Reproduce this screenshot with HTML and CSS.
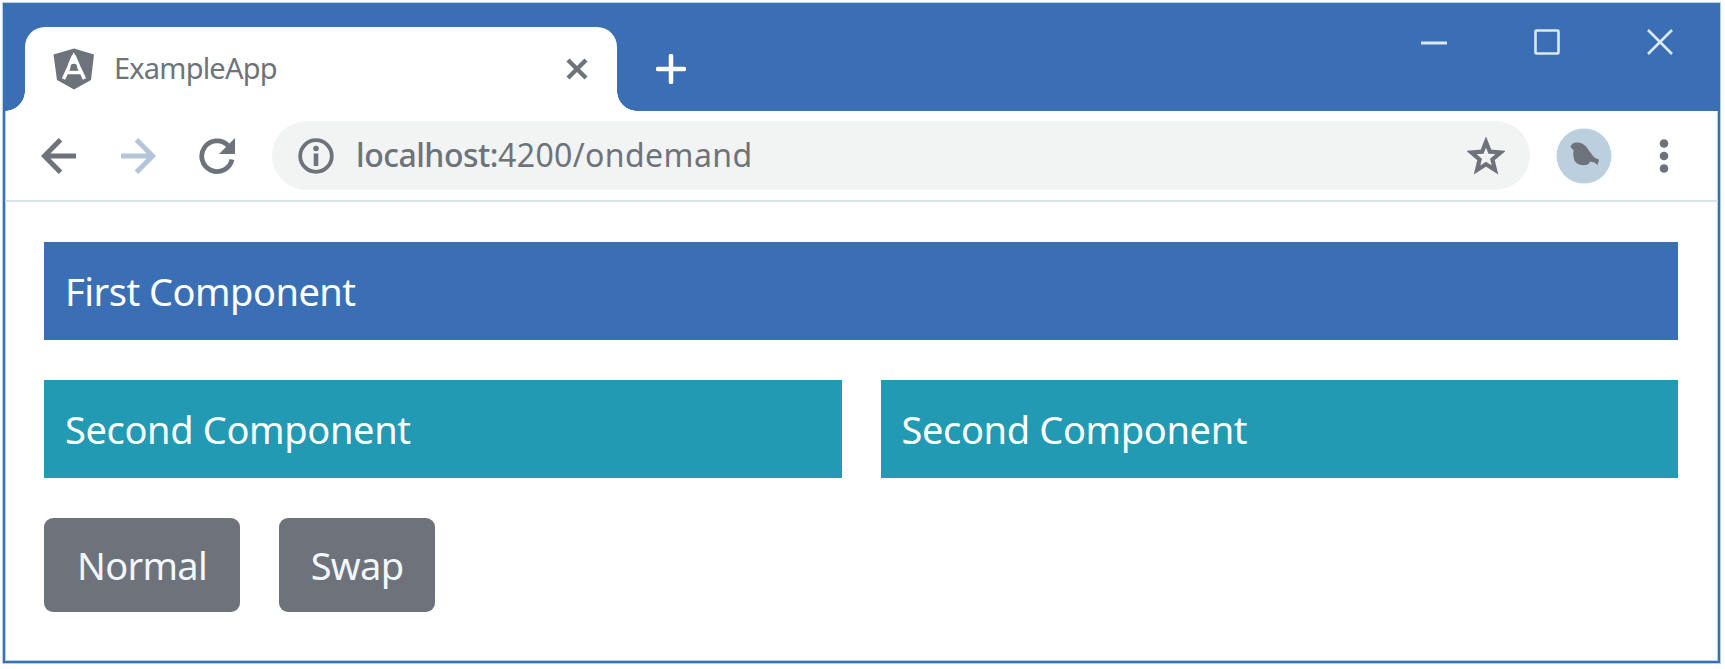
FILE: index.html
```html
<!DOCTYPE html>
<html lang="en">
<head>
<meta charset="utf-8">
<title>ExampleApp</title>
<link rel="stylesheet" href="styles.css">
</head>
<body>
<div class="window">
  <header class="titlebar">
    <div class="tab">
      <svg class="logo" width="42" height="42" viewBox="0 0 42 42"><path fill="#6e737b" d="M21 0.5 41 6.5 38 32 21 41.500 4 32 0.500 6.500Z"/><path fill="none" stroke="#fff" stroke-width="3.600" d="M10.500 31 20.800 8.500 31.500 31M14 24.500H28"/><path fill="#fff" d="M19 7h3.600l4 9.500h-11.600z"/><circle cx="20.800" cy="19" r="3.300" fill="#6e737b"/></svg>
      <span class="tab-title">ExampleApp</span>
      <svg class="tab-close" width="22" height="22" viewBox="0 0 22 22"><path stroke="#6e737b" stroke-width="4.400" d="M2 2 20 20M20 2 2 20"/></svg>
    </div>
    <svg class="new-tab" width="30" height="30" viewBox="0 0 30 30"><path stroke="#fff" stroke-width="4.500" stroke-linecap="round" d="M2 15H28M15 2V28"/></svg>
    <div class="controls">
      <svg width="26" height="26" viewBox="0 0 26 26"><path stroke="#dce8f2" stroke-width="3" d="M0 14H26"/></svg>
      <svg width="26" height="26" viewBox="0 0 26 26"><rect x="1.500" y="1.500" width="23" height="23" rx="1" fill="none" stroke="#dce8f2" stroke-width="2.600"/></svg>
      <svg width="26" height="26" viewBox="0 0 26 26"><path stroke="#dce8f2" stroke-width="2.600" d="M1 1 25 25M25 1 1 25"/></svg>
    </div>
  </header>
  <nav class="toolbar">
    <svg width="36" height="36" viewBox="0 0 36 36"><path fill="none" stroke="#6e737b" stroke-width="5" d="M35 18H4M19.500 1.800 3.500 18 19.500 34.200"/></svg>
    <svg class="forward" width="36" height="36" viewBox="0 0 36 36"><path fill="none" stroke="#b3c5d7" stroke-width="5" d="M1 18H32M16.500 1.800 32.500 18 16.500 34.200"/></svg>
    <svg class="reload" width="36" height="36" viewBox="0 0 36 36"><path fill="none" stroke="#6e737b" stroke-width="4.800" d="M33 21.500A15.300 15.300 0 1 1 29 7.500"/><path fill="#6e737b" d="M36 0V16H20Z"/></svg>
    <div class="address">
      <svg width="36" height="36" viewBox="0 0 36 36"><circle cx="18" cy="18" r="15.800" fill="none" stroke="#6e737b" stroke-width="3.800"/><circle cx="18" cy="10.500" r="2.800" fill="#6e737b"/><path stroke="#6e737b" stroke-width="4.600" d="M18 15.500V28"/></svg>
      <span class="url"><span class="host">localhost:</span><span class="path">4200/ondemand</span></span>
      <svg class="star" width="38" height="38" viewBox="0 0 38 38"><path fill="none" stroke="#6e737b" stroke-width="4.200" d="M19 5 22.900 14.700 33.500 15.500 25.400 22.400 28 33 19 27.300 10 33 12.600 22.400 4.500 15.500 15.100 14.700Z"/></svg>
    </div>
    <svg class="avatar" width="56" height="56" viewBox="0 0 56 56"><circle cx="28" cy="28" r="27.500" fill="#bccfdf"/><path fill="#6e737b" d="M14.500 19C15.500 14 22 13.500 26 15.500 31.500 18.500 34 25 38.500 29.500L42.500 31.500 41 29 43 32 41.500 37 38.500 34.500 34 33.500C33 37.500 28 38 23 36.500 17.500 34.500 17 28.500 17.500 22Z"/></svg>
    <svg class="menu" width="10" height="34" viewBox="0 0 10 34"><g fill="#6e737b"><circle cx="5" cy="4.500" r="4.300"/><circle cx="5" cy="17" r="4.300"/><circle cx="5" cy="29.500" r="4.300"/></g></svg>
  </nav>
  <main class="content">
    <div class="panel primary"><span class="first-label">First Component</span></div>
    <div class="row">
      <div class="panel info"><span class="second-label">Second Component</span></div>
      <div class="panel info"><span class="second-label">Second Component</span></div>
    </div>
    <div class="buttons">
      <button class="btn normal"><span>Normal</span></button>
      <button class="btn swap"><span>Swap</span></button>
    </div>
  </main>
</div>
</body>
</html>
```
FILE: styles.css
```css
* { box-sizing: border-box; }
body {
  margin: 0;
  padding: 3px 5px 5px 3px;
  height: 669px;
  overflow: hidden;
  background: #fff;
  font-family: "Noto Sans", "Open Sans", sans-serif;
}
svg { display: block; flex: none; }
.window {
  height: 660px;
  border: 2px solid #3b6fb5;
  box-shadow: 0 0 0 1px #b5d2e3, inset 0 0 0 1px #b5d2e3;
}
.titlebar {
  display: flex;
  height: 106px;
  padding: 22px 0 0 20px;
  background: #3b6fb5;
}
.tab {
  position: relative;
  display: flex;
  align-items: center;
  width: 592px;
  height: 84px;
  padding: 0 29px 0 28px;
  border-radius: 20px 20px 0 0;
  background: #fff;
}
.tab::before,
.tab::after {
  content: "";
  position: absolute;
  bottom: 0;
  width: 20px;
  height: 20px;
}
.tab::before {
  right: 100%;
  background: radial-gradient(circle at 0 0, transparent 19.5px, #fff 20px);
}
.tab::after {
  left: 100%;
  background: radial-gradient(circle at 100% 0, transparent 19.5px, #fff 20px);
}
.tab-title {
  margin: -3px 0 0 19px;
  color: #6e737b;
  font-size: 29px;
  letter-spacing: -0.8px;
}
.tab-close { margin-left: auto; }
.new-tab { margin: 27px 0 0 39px; }
.controls {
  display: flex;
  gap: 87px;
  margin: 2px 45px 0 auto;
}
.toolbar {
  display: flex;
  align-items: center;
  height: 91px;
  padding: 0 30px 0 36px;
  border-bottom: 2px solid #d4e3ee;
}
.forward { margin-left: 43px; }
.reload { margin-left: 43px; }
.address {
  display: flex;
  align-items: center;
  width: 1258px;
  height: 69px;
  margin-left: 37px;
  padding: 0 25px 0 26px;
  border-radius: 35px;
  background: #f2f4f4;
}
.url {
  margin: -2px 0 0 22px;
  color: #6e737b;
  font-size: 32px;
  white-space: nowrap;
}
.host {
  font-weight: 500;
  letter-spacing: -0.5px;
}
.path { letter-spacing: 0.4px; }
.star { margin-left: auto; }
.avatar { margin-left: 26px; }
.menu { margin-left: 47px; }
.content {
  display: grid;
  gap: 40px;
  padding: 40px 40px 0 39px;
}
.panel {
  display: flex;
  align-items: center;
  height: 98px;
  padding: 0 20px 0 21px;
  color: #fff;
  font-size: 38px;
  white-space: nowrap;
}
.primary { background: #3b6fb5; }
.info { background: #229ab3; }
.first-label { letter-spacing: -0.5px; }
.second-label { letter-spacing: -0.35px; }
.row {
  display: grid;
  grid-template-columns: 1fr 1fr;
  gap: 39px;
}
.buttons {
  display: flex;
  gap: 39px;
}
.btn {
  height: 94px;
  padding: 0;
  border: 0;
  border-radius: 9px;
  background: #6e737b;
  color: #f2f7fb;
  font-family: inherit;
  font-size: 38px;
  letter-spacing: -0.7px;
}
.normal { width: 196px; }
.swap { width: 156px; }
```
